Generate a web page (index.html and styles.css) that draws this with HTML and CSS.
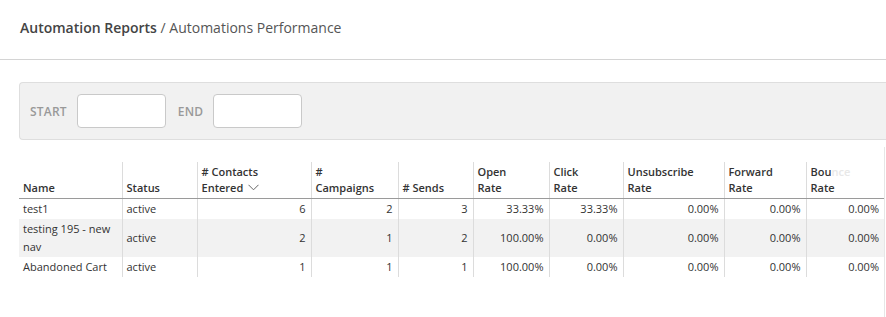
FILE: index.html
```html
<!DOCTYPE html>
<html>
<head>
<meta charset="utf-8">
<link rel="stylesheet" href="styles.css">
</head>
<body>
<header class="page-head">
  <h1 class="crumbs"><strong>Automation Reports</strong> / Automations Performance</h1>
</header>
<main class="content">
  <div class="filters">
    <label class="flabel">START</label>
    <span class="finput"></span>
    <label class="flabel">END</label>
    <span class="finput"></span>
  </div>
  <div class="table-wrap">
    <table class="report">
      <colgroup>
        <col style="width:103px"><col style="width:75px"><col style="width:114px"><col style="width:87px"><col style="width:75px"><col style="width:76px"><col style="width:74px"><col style="width:101px"><col style="width:82px"><col style="width:78px">
      </colgroup>
      <thead>
        <tr>
          <th>Name</th>
          <th>Status</th>
          <th># Contacts<br>Entered <svg class="chev" width="11" height="7" viewBox="0 0 11 7"><path d="M0.5 0.8 L5.5 5.8 L10.5 0.8" fill="none" stroke="#666" stroke-width="1"/></svg></th>
          <th>#<br>Campaigns</th>
          <th># Sends</th>
          <th>Open<br>Rate</th>
          <th>Click<br>Rate</th>
          <th>Unsubscribe<br>Rate</th>
          <th>Forward<br>Rate</th>
          <th>Bou<span class="fade">nce</span><br>Rate</th>
        </tr>
      </thead>
      <tbody>
        <tr>
          <td>test1</td><td>active</td><td class="num">6</td><td class="num">2</td><td class="num">3</td><td class="num">33.33%</td><td class="num">33.33%</td><td class="num">0.00%</td><td class="num">0.00%</td><td class="num">0.00%</td>
        </tr>
        <tr class="alt">
          <td>testing 195 - new nav</td><td>active</td><td class="num">2</td><td class="num">1</td><td class="num">2</td><td class="num">100.00%</td><td class="num">0.00%</td><td class="num">0.00%</td><td class="num">0.00%</td><td class="num">0.00%</td>
        </tr>
        <tr>
          <td>Abandoned Cart</td><td>active</td><td class="num">1</td><td class="num">1</td><td class="num">1</td><td class="num">100.00%</td><td class="num">0.00%</td><td class="num">0.00%</td><td class="num">0.00%</td><td class="num">0.00%</td>
        </tr>
      </tbody>
    </table>
  </div>
</main>
</body>
</html>
```

FILE: styles.css
```css
* { box-sizing: border-box; }
html, body { margin: 0; padding: 0; background: #fff; }
body {
  font-family: "Open Sans", "Liberation Sans", sans-serif;
  color: #333;
  overflow: hidden;
  height: 317px;
}
.page-head {
  height: 60px;
  border-bottom: 1px solid #d4d4d4;
  padding: 18px 0 0 20px;
}
.crumbs {
  margin: 0;
  font-size: 14px;
  font-weight: 400;
  color: #555;
  line-height: 20px;
}
.crumbs strong { font-weight: 600; color: #444; }
.content { padding: 22px 0 0 19px; }
.filters {
  display: flex;
  align-items: center;
  height: 58px;
  background: #f1f1f1;
  border: 1px solid #dedede;
  border-right: none;
  border-radius: 4px 0 0 4px;
  padding-left: 10px;
}
.flabel {
  font-size: 12px;
  font-weight: 600;
  color: #999;
  margin-right: 10px;
  letter-spacing: 0.2px;
}
.finput {
  width: 89px;
  height: 34px;
  background: #fff;
  border: 1px solid #c9c9c9;
  border-radius: 4px;
  margin-right: 12px;
}
.table-wrap {
  margin-top: 7px;
  width: 866px;
  border-right: 1px solid #e6e6e6;
  padding-top: 15px;
  height: 170px;
}
.report {
  border-collapse: collapse;
  table-layout: fixed;
  width: 865px;
  font-size: 11px;
}
.report th {
  text-align: left;
  vertical-align: bottom;
  font-weight: 600;
  color: #333;
  line-height: 16px;
  padding: 2px 5px 2px 4px;
  border-bottom: 1px solid #9a9a9a;
  white-space: nowrap;
}
.report th + th, .report td + td { border-left: 1px solid #dcdcdc; }
.report td {
  line-height: 18px;
  padding: 1px 5px 1px 4px;
  color: #333;
  vertical-align: middle;
}
.report td.num { text-align: right; padding-right: 5px; }
.report tr.alt td { background: #f2f2f2; }
.chev { vertical-align: 1px; margin-left: 2px; }
.fade { color: #e8e8e8; }
```
